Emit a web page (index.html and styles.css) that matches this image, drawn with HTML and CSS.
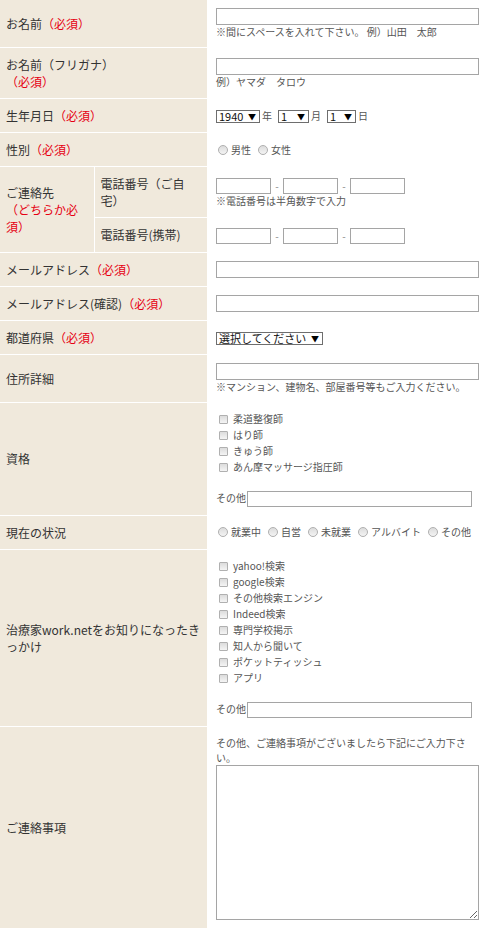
FILE: index.html
```html
<!DOCTYPE html>
<html lang="ja">
<head>
    <meta charset="UTF-8">
    <meta name="viewport" content="width=device-width, initial-scale=1.0">
    <title>エントリーフォーム</title>
    <link rel="stylesheet" href="styles.css">
</head>
<body>

<form class="entry">
    <table class="form-table">
        <colgroup>
            <col class="col-a">
            <col class="col-b">
            <col>
        </colgroup>

        <!-- 名前 -->
        <tr>
            <th colspan="2">お名前<span class="req">（必須）</span></th>
            <td>
                <input type="text" class="txt">
                <p class="note">※間にスペースを入れて下さい。 例）山田　太郎</p>
            </td>
        </tr>
        <tr>
            <th colspan="2">お名前（フリガナ）<br><span class="req">（必須）</span></th>
            <td>
                <input type="text" class="txt">
                <p class="note">例）ヤマダ　タロウ</p>
            </td>
        </tr>

        <!-- 生年月日 -->
        <tr>
            <th colspan="2">生年月日<span class="req">（必須）</span></th>
            <td>
                <span class="sel sel-year"><select><option>1940</option></select></span><span class="unit">年</span><span class="sel sel-num"><select><option>1</option></select></span><span class="unit">月</span><span class="sel sel-num sel-day"><select><option>1</option></select></span><span class="unit">日</span>
            </td>
        </tr>

        <tr>
            <th colspan="2">性別<span class="req">（必須）</span></th>
            <td>
                <label class="opt"><input type="radio" name="sex">男性</label><label class="opt"><input type="radio" name="sex">女性</label>
            </td>
        </tr>

        <!-- 連絡先 -->
        <tr>
            <th rowspan="2" class="contact">ご連絡先<br><span class="req">（どちらか必須）</span></th>
            <th class="sub">電話番号（ご自宅）</th>
            <td>
                <input type="text" class="tel"><span class="dash">-</span><input type="text" class="tel"><span class="dash">-</span><input type="text" class="tel">
                <p class="note">※電話番号は半角数字で入力</p>
            </td>
        </tr>
        <tr>
            <th class="sub">電話番号(携帯)</th>
            <td>
                <input type="text" class="tel"><span class="dash">-</span><input type="text" class="tel"><span class="dash">-</span><input type="text" class="tel">
            </td>
        </tr>

        <tr>
            <th colspan="2">メールアドレス<span class="req">（必須）</span></th>
            <td><input type="text" class="txt"></td>
        </tr>
        <tr>
            <th colspan="2">メールアドレス(確認)<span class="req">（必須）</span></th>
            <td><input type="text" class="txt"></td>
        </tr>
        <tr>
            <th colspan="2">都道府県<span class="req">（必須）</span></th>
            <td>
                <span class="sel sel-pref"><select><option>選択してください</option></select></span>
            </td>
        </tr>
        <tr>
            <th colspan="2">住所詳細</th>
            <td>
                <input type="text" class="txt">
                <p class="note">※マンション、建物名、部屋番号等もご入力ください。</p>
            </td>
        </tr>

        <!-- 資格 -->
        <tr>
            <th colspan="2">資格</th>
            <td>
                <label class="chk"><input type="checkbox">柔道整復師</label>
                <label class="chk"><input type="checkbox">はり師</label>
                <label class="chk"><input type="checkbox">きゅう師</label>
                <label class="chk"><input type="checkbox">あん摩マッサージ指圧師</label>
                <div class="other">その他<input type="text" class="other-txt"></div>
            </td>
        </tr>

        <tr>
            <th colspan="2">現在の状況</th>
            <td>
                <label class="opt"><input type="radio" name="status">就業中</label><label class="opt"><input type="radio" name="status">自営</label><label class="opt"><input type="radio" name="status">未就業</label><label class="opt"><input type="radio" name="status">アルバイト</label><label class="opt"><input type="radio" name="status">その他</label>
            </td>
        </tr>

        <!-- きっかけ -->
        <tr>
            <th colspan="2">治療家work.netをお知りになったきっかけ</th>
            <td>
                <label class="chk"><input type="checkbox">yahoo!検索</label>
                <label class="chk"><input type="checkbox">google検索</label>
                <label class="chk"><input type="checkbox">その他検索エンジン</label>
                <label class="chk"><input type="checkbox">Indeed検索</label>
                <label class="chk"><input type="checkbox">専門学校掲示</label>
                <label class="chk"><input type="checkbox">知人から聞いて</label>
                <label class="chk"><input type="checkbox">ポケットティッシュ</label>
                <label class="chk"><input type="checkbox">アプリ</label>
                <div class="other">その他<input type="text" class="other-txt"></div>
            </td>
        </tr>

        <tr>
            <th colspan="2">ご連絡事項</th>
            <td>
                <p class="lead">その他、ご連絡事項がございましたら下記にご入力下さい。</p>
                <textarea class="msg"></textarea>
            </td>
        </tr>
    </table>
</form>

</body>
</html>
```

FILE: styles.css
```css
body {
    margin: 0;
    font-family: "Noto Sans CJK JP", "Noto Sans", sans-serif;
    color: #333;
    background: #fff;
}
.form-table {
    width: 100%;
    border-collapse: collapse;
    table-layout: fixed;
}
.col-a {
    width: 94px;
}
.col-b {
    width: 113px;
}
.form-table th,
.form-table td {
    border-bottom: 1px solid #fff;
    vertical-align: middle;
}
.form-table th {
    background-color: #f0e9dc;
    font-weight: normal;
    text-align: left;
    font-size: 12px;
    line-height: 17px;
    padding: 8px 6px;
}
.form-table th.sub {
    border-left: 1px solid #fff;
}
.form-table th.contact {
    text-spacing-trim: space-all;
}
.form-table td {
    font-size: 10px;
    line-height: 16px;
    color: #555;
    padding: 8px 8px 8px 9px;
}
.req {
    color: #e60012;
}

/* テキスト入力 */
.txt {
    display: block;
    box-sizing: border-box;
    width: 100%;
    height: 17px;
    margin: 0;
    padding: 0 2px;
    border: 1px solid #a5a5a5;
    border-radius: 0;
}
.note {
    margin: 0;
    font-size: 10px;
    line-height: 14px;
    color: #555;
}
.tel {
    box-sizing: border-box;
    width: 55px;
    height: 16px;
    margin: 0;
    padding: 0 2px;
    border: 1px solid #a5a5a5;
    border-radius: 0;
    vertical-align: middle;
}
.dash {
    display: inline-block;
    width: 12px;
    text-align: center;
    color: #888;
    vertical-align: middle;
}

/* セレクト */
.sel {
    position: relative;
    display: inline-block;
    vertical-align: middle;
}
.sel select {
    -webkit-appearance: none;
    appearance: none;
    display: block;
    box-sizing: border-box;
    height: 13px;
    margin: 0;
    padding: 0 12px 0 2px;
    border: 1px solid #6e6e6e;
    border-radius: 0;
    background: #fff;
    font-family: "Noto Sans CJK JP", sans-serif;
    font-size: 11px;
    line-height: 11px;
    color: #111;
}
.sel::after {
    content: "▼";
    position: absolute;
    right: 4px;
    top: 0;
    font-size: 8px;
    line-height: 13px;
    color: #000;
    pointer-events: none;
}
.sel-year select {
    width: 44px;
}
.sel-num select {
    width: 31px;
}
.sel-day select {
    width: 29px;
}
.sel-pref select {
    width: 107px;
    font-size: 11px;
}
.unit {
    display: inline-block;
    margin: 0 6px 0 2px;
    vertical-align: middle;
    color: #555;
}

/* ラジオ・チェック */
.opt {
    margin-right: 5px;
}
.opt input,
.chk input {
    -webkit-appearance: none;
    appearance: none;
    box-sizing: border-box;
    margin: 0 3px 0 2px;
    border: 1px solid #b0b0b0;
    background: linear-gradient(#dcdcdc, #f4f4f4);
    vertical-align: -1px;
}
.opt input {
    width: 10px;
    height: 10px;
    border-radius: 50%;
}
.chk {
    display: block;
}
.chk input {
    width: 9px;
    height: 9px;
    margin: 0 5px 0 3px;
    border-radius: 1px;
}
.other {
    margin-top: 15px;
}
.other-txt {
    box-sizing: border-box;
    width: 225px;
    height: 16px;
    margin: 0 0 0 1px;
    padding: 0 2px;
    border: 1px solid #a5a5a5;
    border-radius: 0;
    vertical-align: middle;
}

/* ご連絡事項 */
.lead {
    margin: 0;
    line-height: 15px;
}
.msg {
    display: block;
    box-sizing: border-box;
    width: 100%;
    height: 155px;
    margin: 0;
    border: 1px solid #a5a5a5;
    border-radius: 0;
}
```
